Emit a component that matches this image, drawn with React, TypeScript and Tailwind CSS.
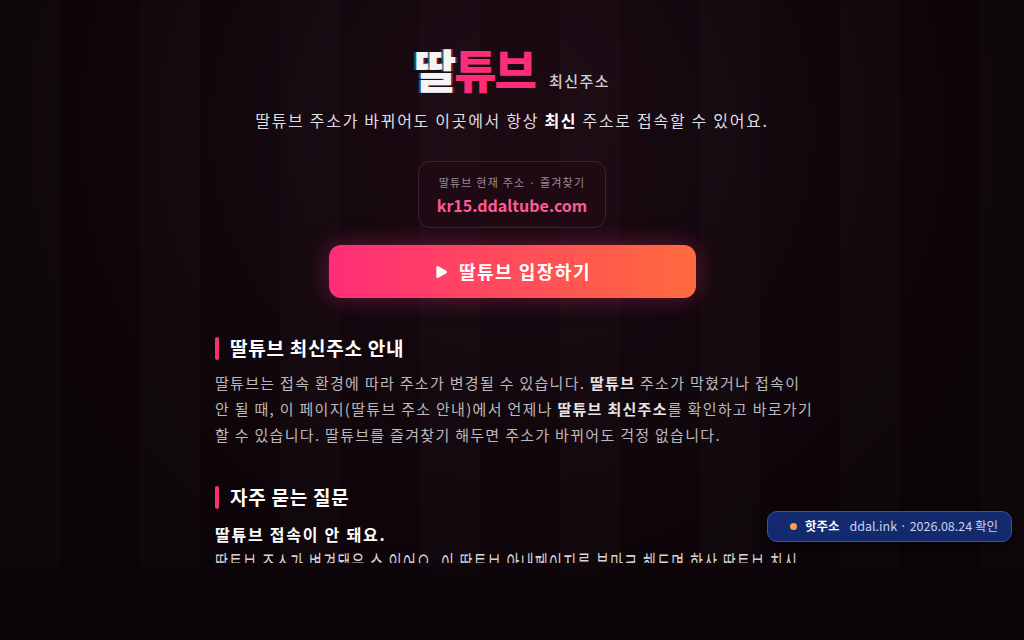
import { Play } from 'lucide-react';

const font = { fontFamily: '"Noto Sans CJK KR", "Noto Sans", sans-serif' };

function SectionTitle({ children }: { children: string }) {
  return (
    <h2 className="flex items-center gap-[11px] text-[19px] font-bold leading-[24px] tracking-[0.75px] text-white">
      <span className="h-[23px] w-[4px] rounded-sm bg-[#ff2d78]" />
      {children}
    </h2>
  );
}

export default function App() {
  return (
    <div
      style={font}
      className="relative h-[640px] w-full overflow-hidden bg-[#0d050a] bg-[radial-gradient(ellipse_at_50%_20%,#1e0a14_0%,#12070d_40%,#0b0408_75%)] text-white"
    >
      <div className="pointer-events-none absolute inset-0 bg-[repeating-linear-gradient(90deg,rgba(255,255,255,0.012)_0px,rgba(255,255,255,0.012)_60px,rgba(0,0,0,0.03)_60px,rgba(0,0,0,0.03)_140px)]" />

      <main className="relative mx-auto flex w-[594px] flex-col pt-[40px]">
        <header className="flex flex-col items-center">
          <div className="flex items-end">
            <span className="text-[46px] font-black leading-[56px] tracking-[-2px] text-[#f4f4f6] [text-shadow:-2px_0_0_rgba(0,220,255,0.4),2px_0_0_rgba(255,45,120,0.4)]">
              딸
            </span>
            <span className="text-[46px] font-black leading-[56px] tracking-[-2px] text-[#ff2d78]">튜브</span>
            <span className="mb-[4px] ml-[14px] text-[15px] font-medium tracking-[1.5px] text-[#cfcfd4]">최신주소</span>
          </div>
          <p className="mt-[12px] text-[16px] leading-[24px] tracking-[1.7px] text-[#dedee2]">
            딸튜브 주소가 바뀌어도 이곳에서 항상 <b className="font-bold text-white">최신</b> 주소로 접속할 수 있어요.
          </p>

          <div className="mt-[29px] flex flex-col items-center rounded-[12px] border border-[#4a1b30] bg-[#1f0a14] px-[18px] pb-[10px] pt-[12px]">
            <span className="text-[11px] leading-[16px] tracking-[1.2px] text-[#9a8a92]">딸튜브 현재 주소 · 즐겨찾기</span>
            <span className="mt-[3px] text-[16px] font-bold leading-[24px] text-[#ff5a93]">kr15.ddaltube.com</span>
          </div>

          <button className="mt-[17px] flex h-[53px] w-[367px] items-center justify-center gap-[10px] rounded-[12px] bg-[linear-gradient(90deg,#ff2d78,#ff6b3d)] text-[18px] font-bold tracking-[1.5px] text-white shadow-[0_0_24px_rgba(255,45,120,0.35)]">
            <Play size={15} fill="white" strokeWidth={0} className="h-[16px] w-[16px]" />
            딸튜브 입장하기
          </button>
        </header>

        <section className="mt-[38px]">
          <SectionTitle>딸튜브 최신주소 안내</SectionTitle>
          <p className="mt-[10px] whitespace-nowrap text-[15px] leading-[26px] tracking-[1.3px] text-[#bdb8bb]">
            딸튜브는 접속 환경에 따라 주소가 변경될 수 있습니다. <b className="font-bold text-[#e8e4e6]">딸튜브</b> 주소가 막혔거나 접속이
            <br />
            안 될 때, 이 페이지(딸튜브 주소 안내)에서 언제나 <b className="font-bold text-[#e8e4e6]">딸튜브 최신주소</b>를 확인하고 바로가기
            <br />
            할 수 있습니다. 딸튜브를 즐겨찾기 해두면 주소가 바뀌어도 걱정 없습니다.
          </p>
        </section>

        <section className="mt-[37px]">
          <SectionTitle>자주 묻는 질문</SectionTitle>
          <h3 className="mt-[13px] text-[16px] font-bold leading-[24px] tracking-[1.75px] text-white">딸튜브 접속이 안 돼요.</h3>
          <div className="h-[17px] overflow-hidden">
            <p className="origin-top scale-y-[1.7] whitespace-nowrap text-[14px] leading-[20px] tracking-[1.3px] text-[#d8d4d6]">
              딸튜브 주소가 변경됐을 수 있어요. 이 딸튜브 안내페이지를 북마크 해두면 항상 딸튜브 최신
            </p>
          </div>
        </section>
      </main>

      <div className="pointer-events-none absolute inset-x-0 bottom-0 h-[78px] bg-[linear-gradient(180deg,rgba(11,4,8,0)_0px,rgba(11,4,8,0.6)_9px,#0b0408_15px,#0b0408_100%)]" />

      <div className="absolute left-[767px] top-[511px] flex h-[31px] w-[245px] items-center gap-[8px] rounded-[10px] border border-[#3553a8] bg-[#142a6e] pl-[22px] text-[12.5px] shadow-[0_4px_14px_rgba(0,0,0,0.5)]">
        <span className="h-[7px] w-[7px] rounded-full bg-[#f7a24b]" />
        <span className="font-bold text-white">핫주소</span>
        <span className="ml-[2px] text-[#c7d2ee]">ddal.ink · 2026.08.24 확인</span>
      </div>
    </div>
  );
}
